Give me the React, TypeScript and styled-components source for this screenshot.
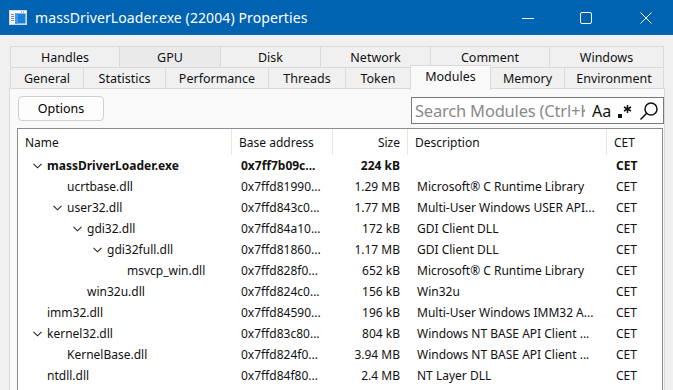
import { Fragment } from 'react';
import styled, { createGlobalStyle } from 'styled-components';

interface ModuleRow {
  name: string;
  level: number;
  expandable?: boolean;
  bold?: boolean;
  base: string;
  size: string;
  description: string;
}

const modules: ModuleRow[] = [
  { name: 'massDriverLoader.exe', level: 0, expandable: true, bold: true, base: '0x7ff7b09c...', size: '224 kB', description: '' },
  { name: 'ucrtbase.dll', level: 1, base: '0x7ffd81990...', size: '1.29 MB', description: 'Microsoft® C Runtime Library' },
  { name: 'user32.dll', level: 1, expandable: true, base: '0x7ffd843c0...', size: '1.77 MB', description: 'Multi-User Windows USER API...' },
  { name: 'gdi32.dll', level: 2, expandable: true, base: '0x7ffd84a10...', size: '172 kB', description: 'GDI Client DLL' },
  { name: 'gdi32full.dll', level: 3, expandable: true, base: '0x7ffd81860...', size: '1.17 MB', description: 'GDI Client DLL' },
  { name: 'msvcp_win.dll', level: 4, base: '0x7ffd828f0...', size: '652 kB', description: 'Microsoft® C Runtime Library' },
  { name: 'win32u.dll', level: 2, base: '0x7ffd824c0...', size: '156 kB', description: 'Win32u' },
  { name: 'imm32.dll', level: 0, base: '0x7ffd84590...', size: '196 kB', description: 'Multi-User Windows IMM32 A...' },
  { name: 'kernel32.dll', level: 0, expandable: true, base: '0x7ffd83c80...', size: '804 kB', description: 'Windows NT BASE API Client ...' },
  { name: 'KernelBase.dll', level: 1, base: '0x7ffd824f0...', size: '3.94 MB', description: 'Windows NT BASE API Client ...' },
  { name: 'ntdll.dll', level: 0, base: '0x7ffd84f80...', size: '2.4 MB', description: 'NT Layer DLL' },
];

const topTabs = [
  { label: 'Handles', width: 110 },
  { label: 'GPU', width: 101, hot: true },
  { label: 'Disk', width: 100 },
  { label: 'Network', width: 110 },
  { label: 'Comment', width: 119 },
  { label: 'Windows', width: 114 },
];

const bottomTabs = [
  { label: 'General', width: 74 },
  { label: 'Statistics', width: 82 },
  { label: 'Performance', width: 103 },
  { label: 'Threads', width: 77 },
  { label: 'Token', width: 65 },
  { label: 'Modules', width: 80, selected: true },
  { label: 'Memory', width: 74 },
  { label: 'Environment', width: 99 },
];

const GlobalStyle = createGlobalStyle`
  html, body {
    margin: 0;
    padding: 0;
    background: #f0f0f0;
  }
  * {
    box-sizing: border-box;
  }
`;

const Window = styled.div`
  width: 673px;
  height: 390px;
  overflow: hidden;
  background: #f0f0f0;
  font-family: 'Segoe UI', 'Noto Sans', sans-serif;
  color: #000;
`;

const TitleBar = styled.div`
  height: 35px;
  background: #0063b1;
  display: flex;
  align-items: center;
  padding-left: 9px;
  color: #fff;
`;

const TitleText = styled.span`
  margin-left: 8px;
  font-size: 14px;
  letter-spacing: 0.1px;
  flex: 1;
`;

const Controls = styled.div`
  display: flex;
  align-items: center;
  gap: 46px;
  padding-right: 21px;
`;

const TabStrip = styled.div`
  padding: 11px 0 0 10px;
  display: flex;
  flex-direction: column;
`;

const TabRow = styled.div`
  display: flex;
  height: 21px;
`;

const Tab = styled.div<{ $width: number; $hot?: boolean; $selected?: boolean }>`
  width: ${({ $width }) => $width}px;
  display: flex;
  align-items: center;
  justify-content: center;
  font-size: 12.5px;
  color: #111;
  background: ${({ $hot, $selected }) => ($selected ? '#f9f9f9' : $hot ? '#eaeaea' : '#f0f0f0')};
  border-top: 1px solid #dadada;
  border-right: 1px solid #dadada;
  position: relative;

  &:first-child {
    border-left: 1px solid #dadada;
  }

  ${({ $selected }) =>
    $selected &&
    `
    margin: -2px 0 0 -1px;
    width: 81px;
    border-left: 1px solid #dadada;
    height: 25px;
    padding-bottom: 4px;
    z-index: 2;
  `}
`;

const Panel = styled.div`
  margin-left: 9px;
  width: 656px;
  height: 310px;
  background: #f9f9f9;
  border: 1px solid #dadada;
  position: relative;
  z-index: 1;
  padding: 6px 0 0 7px;
`;

const Toolbar = styled.div`
  display: flex;
  align-items: flex-start;
  justify-content: space-between;
  height: 33px;
`;

const Button = styled.div`
  margin: 1px 0 0 1px;
  width: 86px;
  height: 25px;
  border: 1px solid #d0d0d0;
  border-radius: 4px;
  background: #fdfdfd;
  display: flex;
  align-items: center;
  justify-content: center;
  font-size: 12.5px;
`;

const SearchBox = styled.div`
  margin-top: 2px;
  width: 253px;
  height: 27px;
  border: 1px solid #7a7a7a;
  background: #fff;
  display: flex;
  align-items: center;
`;

const Placeholder = styled.div`
  width: 173px;
  overflow: hidden;
  white-space: nowrap;
  padding-left: 3px;
  font-size: 16.5px;
  color: #8a8a8a;
  letter-spacing: -0.2px;
`;

const CaseToggle = styled.span`
  margin-left: 7px;
  font-size: 16px;
  color: #111;
`;

const IconSlot = styled.span`
  display: flex;
  align-items: center;
  margin-left: 6px;
`;

const List = styled.div`
  width: 646px;
  height: 270px;
  background: #fff;
  border: 1px solid #8c8c8c;
  border-bottom: none;
  font-size: 12px;
`;

const Grid = styled.div`
  display: grid;
  grid-template-columns: 214px 101px 75px 199px 55px;
`;

const HeaderCell = styled.div<{ $right?: boolean; $last?: boolean }>`
  height: 26px;
  display: flex;
  align-items: center;
  justify-content: ${({ $right }) => ($right ? 'flex-end' : 'flex-start')};
  padding: 0 7px;
  border-right: ${({ $last }) => ($last ? 'none' : '1px solid #e5e5e5')};
  color: #111;
`;

const Cell = styled.div<{ $right?: boolean; $bold?: boolean }>`
  height: 21px;
  display: flex;
  align-items: center;
  justify-content: ${({ $right }) => ($right ? 'flex-end' : 'flex-start')};
  padding: ${({ $right }) => ($right ? '0 8px 0 0' : '0 0 0 9px')};
  font-weight: ${({ $bold }) => ($bold ? 700 : 400)};
  white-space: nowrap;
  overflow: hidden;
  color: #111;
`;

const NameCell = styled(Cell)<{ $level: number }>`
  padding-left: ${({ $level }) => 15 + $level * 20}px;
`;

const ChevronSlot = styled.span`
  width: 14px;
  display: flex;
  align-items: center;
`;

function AppIcon() {
  return (
    <svg width="18" height="15" viewBox="0 0 18 15">
      <rect x="0.5" y="0.5" width="17" height="14" fill="#f4f4f4" stroke="#d8d8d8" />
      <rect x="1" y="1" width="16" height="2" fill="#ffffff" />
      <rect x="12" y="1.5" width="1" height="1" fill="#777" />
      <rect x="14" y="1.5" width="1" height="1" fill="#777" />
      <rect x="2" y="4" width="3" height="1" fill="#888" />
      <rect x="2" y="6" width="3" height="1" fill="#888" />
      <rect x="2" y="8" width="3" height="1" fill="#888" />
      <rect x="2" y="10" width="3" height="1" fill="#888" />
      <rect x="6" y="3.5" width="10.5" height="10" fill="#1a7fd8" />
      <rect x="6" y="3.5" width="3" height="10" fill="#3b98ea" />
    </svg>
  );
}

function Chevron() {
  return (
    <svg width="9" height="6" viewBox="0 0 9 6">
      <polyline points="0.5,0.8 4.5,4.8 8.5,0.8" fill="none" stroke="#222" strokeWidth="1.1" />
    </svg>
  );
}

function RegexIcon() {
  return (
    <svg width="16" height="16" viewBox="0 0 16 16">
      <rect x="1" y="11" width="4" height="4" fill="#111" />
      <g stroke="#111" strokeWidth="1.5">
        <line x1="10.5" y1="2" x2="10.5" y2="10" />
        <line x1="7" y1="4" x2="14" y2="8" />
        <line x1="14" y1="4" x2="7" y2="8" />
      </g>
    </svg>
  );
}

function SearchIcon() {
  return (
    <svg width="20" height="20" viewBox="0 0 20 20">
      <circle cx="12" cy="8" r="6" fill="none" stroke="#111" strokeWidth="1.5" />
      <line x1="7.7" y1="12.3" x2="1.5" y2="18.5" stroke="#111" strokeWidth="1.6" />
    </svg>
  );
}

export default function App() {
  return (
    <Window>
      <GlobalStyle />
      <TitleBar>
        <AppIcon />
        <TitleText>massDriverLoader.exe (22004) Properties</TitleText>
        <Controls>
          <svg width="12" height="12" viewBox="0 0 12 12">
            <line x1="0" y1="6.5" x2="12" y2="6.5" stroke="#fff" strokeWidth="1" />
          </svg>
          <svg width="12" height="12" viewBox="0 0 12 12">
            <rect x="0.5" y="0.5" width="11" height="11" rx="1.5" fill="none" stroke="#fff" strokeWidth="1" />
          </svg>
          <svg width="12" height="12" viewBox="0 0 12 12" style={{ marginLeft: 2 }}>
            <path d="M0.5 0.5 L11.5 11.5 M11.5 0.5 L0.5 11.5" stroke="#fff" strokeWidth="1" />
          </svg>
        </Controls>
      </TitleBar>

      <TabStrip>
        <TabRow>
          {topTabs.map((t) => (
            <Tab key={t.label} $width={t.width} $hot={t.hot}>
              {t.label}
            </Tab>
          ))}
        </TabRow>
        <TabRow>
          {bottomTabs.map((t) => (
            <Tab key={t.label} $width={t.width} $selected={t.selected}>
              {t.label}
            </Tab>
          ))}
        </TabRow>
      </TabStrip>

      <Panel>
        <Toolbar>
          <Button>Options</Button>
          <SearchBox>
            <Placeholder>Search Modules (Ctrl+K)</Placeholder>
            <CaseToggle>Aa</CaseToggle>
            <IconSlot>
              <RegexIcon />
            </IconSlot>
            <IconSlot>
              <SearchIcon />
            </IconSlot>
          </SearchBox>
        </Toolbar>

        <List>
          <Grid>
            <HeaderCell>Name</HeaderCell>
            <HeaderCell>Base address</HeaderCell>
            <HeaderCell $right>Size</HeaderCell>
            <HeaderCell>Description</HeaderCell>
            <HeaderCell $last>CET</HeaderCell>
            {modules.map((m) => (
              <Fragment key={m.name}>
                <NameCell $level={m.level} $bold={m.bold}>
                  <ChevronSlot>{m.expandable && <Chevron />}</ChevronSlot>
                  {m.name}
                </NameCell>
                <Cell $bold={m.bold}>{m.base}</Cell>
                <Cell $right $bold={m.bold}>{m.size}</Cell>
                <Cell>{m.description}</Cell>
                <Cell $bold={m.bold}>CET</Cell>
              </Fragment>
            ))}
          </Grid>
        </List>
      </Panel>
    </Window>
  );
}
